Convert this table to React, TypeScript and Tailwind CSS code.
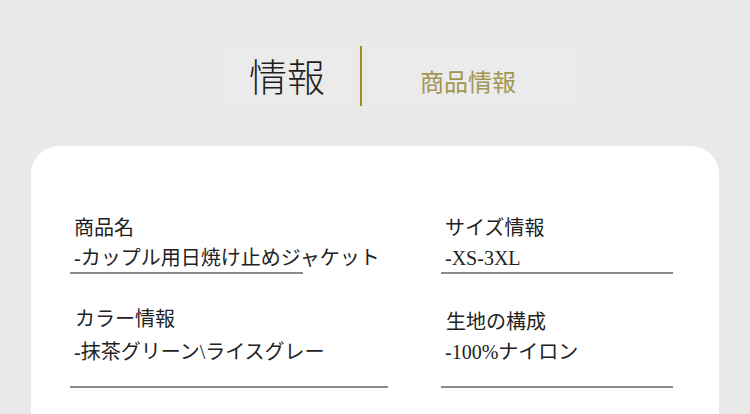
const serif = "font-['Liberation_Serif','Noto_Sans_CJK_JP',serif]";

type Field = {
  label: string;
  value: string;
  lineWidth: string;
};

function InfoField({ label, value, lineWidth }: Field) {
  return (
    <div className="flex flex-col">
      <div className="pl-[4px] text-[20px] leading-[30px] text-[#222]">{label}</div>
      <div className="pl-[4px] text-[20px] leading-[30px] whitespace-nowrap text-[#222]">{value}</div>
      <div className={`mt-[-1px] h-[2px] bg-[#8a8a8a] ${lineWidth}`} />
    </div>
  );
}

export default function App() {
  return (
    <div className={`h-[414px] w-[750px] overflow-hidden bg-[#e9e9e9] ${serif}`}>
      {/* header */}
      <div className="flex h-[146px] items-start pt-[46px]">
        <div className="ml-[222px] flex h-[56px] w-[130px] items-center justify-center bg-[#ebebeb] pt-[2px]">
          <span className="font-['Noto_Sans_CJK_JP',sans-serif] text-[38px] leading-none font-light text-[#1e1e1e]">
            情報
          </span>
        </div>
        <div className="ml-[8px] h-[60px] w-[2px] bg-[#9c8c28]" />
        <div className="ml-[8px] mt-[2px] flex h-[58px] w-[208px] items-center bg-[#ebebeb] pt-[8px] pl-[50px]">
          <span className="font-['Noto_Sans_CJK_JP',sans-serif] text-[24px] leading-none text-[#a39552]">
            商品情報
          </span>
        </div>
      </div>

      {/* card */}
      <div className="mx-[31px] h-[300px] rounded-t-[28px] bg-white pt-[67px] pl-[39px]">
        <div className="grid grid-cols-[371px_232px]">
          <InfoField label="商品名" value="-カップル用日焼け止めジャケット" lineWidth="w-[233px]" />
          <InfoField label="サイズ情報" value="-XS-3XL" lineWidth="w-[232px]" />
          <div className="mt-[30px]">
            <div className="pl-[5px] text-[20px] leading-[30px] text-[#222]">カラー情報</div>
            <div className="mt-[3px] pl-[4px] text-[20px] leading-[30px] whitespace-nowrap text-[#222]">
              -抹茶グリーン\ライスグレー
            </div>
            <div className="mt-[19px] h-[2px] w-[318px] bg-[#8a8a8a]" />
          </div>
          <div className="mt-[33px]">
            <div className="pl-[5px] text-[20px] leading-[30px] text-[#222]">生地の構成</div>
            <div className="pl-[4px] text-[20px] leading-[30px] whitespace-nowrap text-[#222]">-100%ナイロン</div>
            <div className="mt-[19px] h-[2px] w-[232px] bg-[#8a8a8a]" />
          </div>
        </div>
      </div>
    </div>
  );
}
